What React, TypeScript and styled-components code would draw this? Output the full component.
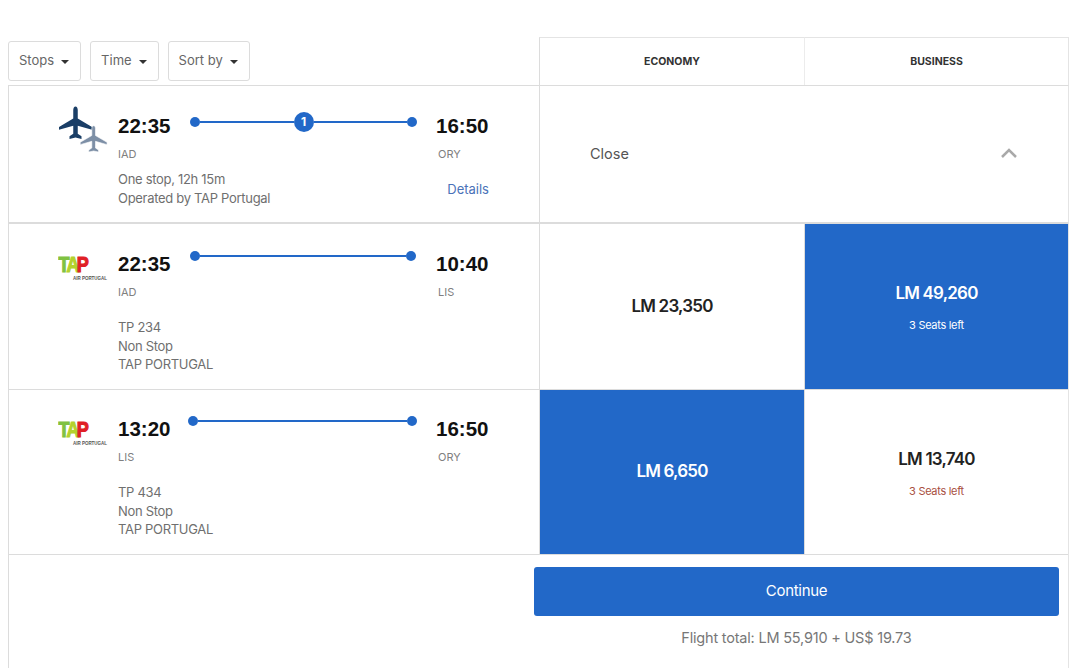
import styled, { createGlobalStyle } from "styled-components";

const BLUE = "#2268c8";
const LINE = "#dcdcdc";

type Fare = { price: string; seats?: string; selected?: boolean };

type Flight = {
  depart: string;
  arrive: string;
  from: string;
  to: string;
  notes: string[];
  height: number;
  top: number;
  routeLeft: number;
  routeRight: number;
  economy: Fare;
  business: Fare;
};

const flights: Flight[] = [
  {
    depart: "22:35",
    arrive: "10:40",
    from: "IAD",
    to: "LIS",
    notes: ["TP 234", "Non Stop", "TAP PORTUGAL"],
    height: 166,
    top: 28,
    routeLeft: 0,
    routeRight: 1,
    economy: { price: "LM 23,350" },
    business: { price: "LM 49,260", seats: "3 Seats left", selected: true },
  },
  {
    depart: "13:20",
    arrive: "16:50",
    from: "LIS",
    to: "ORY",
    notes: ["TP 434", "Non Stop", "TAP PORTUGAL"],
    height: 165,
    top: 27,
    routeLeft: -2,
    routeRight: 0,
    economy: { price: "LM 6,650", selected: true },
    business: { price: "LM 13,740", seats: "3 Seats left" },
  },
];

const PLANE =
  "M12 1c-.9 0-1.5 1-1.5 2.4V9L1 14.6v1.9l9.5-2.7v5.4L8 20.9V22.6l4-.9 4 .9v-1.7l-2.5-1.7v-5.4l9.5 2.7v-1.9L13.500 9V3.400C13.500 2 12.900 1 12 1z";

function Planes() {
  return (
    <svg width="50" height="50" viewBox="0 0 50 50" aria-hidden="true">
      <g transform="translate(-0.500 -1) scale(1.5)">
        <path d={PLANE} fill="#1a3e66" />
      </g>
      <g transform="translate(21 18.500) scale(1.22)">
        <path d={PLANE} fill="#7d8fa6" stroke="#fff" strokeWidth="0.5" />
      </g>
    </svg>
  );
}

function TapLogo() {
  return (
    <svg width="58" height="34" viewBox="0 -7 58 34" aria-hidden="true">
      <g transform="scale(0.82 1)">
        <text
          x="0.500"
          y="16"
          fontFamily="Liberation Sans"
          fontWeight="700"
          fontSize="22"
          letterSpacing="-3.500"
          strokeWidth="1.200"
        >
          <tspan fill="#7fc241" stroke="#7fc241">T</tspan>
          <tspan fill="#b4d12c" stroke="#b4d12c">A</tspan>
          <tspan fill="#e01f26" stroke="#e01f26">P</tspan>
        </text>
      </g>
      <text
        x="15"
        y="24"
        fontFamily="Liberation Sans"
        fontWeight="700"
        fontSize="5"
        fill="#555"
        textLength="34"
        lengthAdjust="spacingAndGlyphs"
      >
        AIR PORTUGAL
      </text>
    </svg>
  );
}

export default function App() {
  return (
    <>
      <GlobalStyle />
      <Page>
        <TopBar>
          <Filters>
            {["Stops", "Time", "Sort by"].map((label) => (
              <FilterButton key={label}>
                {label}
                <Caret />
              </FilterButton>
            ))}
          </Filters>
          <CabinHead>ECONOMY</CabinHead>
          <CabinHead $last>BUSINESS</CabinHead>
        </TopBar>

        <Table>
          <SummaryRow>
            <FlightCell $top={28}>
              <LogoSlot $offset={-8}>
                <Planes />
              </LogoSlot>
              <Time>22:35</Time>
              <Route>
                <Dot />
                <Track />
                <StopBadge>1</StopBadge>
                <Track />
                <Dot />
              </Route>
              <ArriveTime>16:50</ArriveTime>
              <span />
              <Code>IAD</Code>
              <span />
              <ArriveCode>ORY</ArriveCode>
              <span />
              <Notes $gap={8}>
                <div>One stop, 12h 15m</div>
                <div>Operated by TAP Portugal</div>
              </Notes>
              <Details>Details</Details>
            </FlightCell>
            <CloseCell>
              <CloseLabel>Close</CloseLabel>
              <svg width="18" height="10" viewBox="0 0 18 10" aria-hidden="true">
                <path d="M2 9 L9 2 L16 9" fill="none" stroke="#a9a9a9" strokeWidth="2.500" />
              </svg>
            </CloseCell>
          </SummaryRow>

          {flights.map((f) => (
            <FlightRow key={f.notes[0]} $height={f.height}>
              <FlightCell $top={f.top}>
                <LogoSlot $offset={-3}>
                  <TapLogo />
                </LogoSlot>
                <Time>{f.depart}</Time>
                <Route $lift={4} $left={f.routeLeft} $right={f.routeRight}>
                  <Dot />
                  <Track />
                  <Dot />
                </Route>
                <ArriveTime>{f.arrive}</ArriveTime>
                <span />
                <Code>{f.from}</Code>
                <span />
                <ArriveCode>{f.to}</ArriveCode>
                <span />
                <Notes $gap={18}>
                  {f.notes.map((n) => (
                    <div key={n}>{n}</div>
                  ))}
                </Notes>
              </FlightCell>
              {[f.economy, f.business].map((fare) => (
                <FareCell key={fare.price} $selected={fare.selected}>
                  <Price>{fare.price}</Price>
                  {fare.seats && <Seats $selected={fare.selected}>{fare.seats}</Seats>}
                </FareCell>
              ))}
            </FlightRow>
          ))}

          <Footer>
            <FooterColumn>
              <ContinueButton>Continue</ContinueButton>
              <Total>Flight total: LM 55,910 + US$ 19.73</Total>
            </FooterColumn>
          </Footer>
        </Table>
      </Page>
    </>
  );
}

const GlobalStyle = createGlobalStyle`
  html, body {
    margin: 0;
    background: #fff;
    font-family: "Inter", "Liberation Sans", sans-serif;
    overflow: hidden;
  }
`;

const Page = styled.div`
  width: 1061px;
  height: 668px;
  margin-left: 8px;
  padding-top: 37px;
  box-sizing: border-box;
`;

const TopBar = styled.div`
  display: grid;
  grid-template-columns: 531px 265px 265px;
  height: 48px;
`;

const Filters = styled.div`
  display: flex;
  gap: 9px;
  padding-top: 4px;
`;

const FilterButton = styled.button`
  height: 40px;
  padding: 0 11px 2px 10px;
  display: flex;
  align-items: center;
  gap: 7px;
  background: #fff;
  border: 1px solid ${LINE};
  border-radius: 3px;
  font: 400 13px "Inter", sans-serif;
  color: #666;
`;

const Caret = styled.span`
  width: 0;
  height: 0;
  margin-top: 3px;
  border-left: 4px solid transparent;
  border-right: 4px solid transparent;
  border-top: 4px solid #333;
`;

const CabinHead = styled.div<{ $last?: boolean }>`
  display: flex;
  align-items: center;
  justify-content: center;
  border-top: 1px solid #e4e4e4;
  border-left: 1px solid ${(p) => (p.$last ? "#ececec" : LINE)};
  border-right: ${(p) => (p.$last ? "1px solid #e4e4e4" : "none")};
  font-size: 10.500px;
  font-weight: 700;
  color: #333;
`;

const Table = styled.div`
  height: 583px;
  box-sizing: border-box;
  border-top: 1px solid ${LINE};
  border-left: 1px solid ${LINE};
  border-right: 1px solid #e4e4e4;
`;

const SummaryRow = styled.div`
  display: grid;
  grid-template-columns: 530px 1fr;
  height: 138px;
  border-bottom: 2px solid ${LINE};
  box-sizing: border-box;
`;

const FlightRow = styled.div<{ $height: number }>`
  display: grid;
  grid-template-columns: 530px 265px 264px;
  height: ${(p) => p.$height}px;
  border-bottom: 1px solid ${LINE};
  box-sizing: border-box;
`;

const FlightCell = styled.div<{ $top: number }>`
  display: grid;
  grid-template-columns: 60px 72px 227px 72px;
  grid-template-rows: 24px auto auto;
  align-content: start;
  padding: ${(p) => p.$top}px 0 0 49px;
`;

const LogoSlot = styled.div<{ $offset: number }>`
  height: 24px;
  margin-top: ${(p) => p.$offset}px;
`;

const Time = styled.div`
  font-size: 20.500px;
  font-weight: 700;
  line-height: 24px;
  color: #111;
  font-family: "Liberation Sans", sans-serif;
`;

const ArriveTime = styled(Time)`
  padding-left: 19px;
`;

const Route = styled.div<{ $lift?: number; $left?: number; $right?: number }>`
  display: flex;
  align-items: center;
  height: 16px;
  margin-top: ${(p) => -(p.$lift ?? 0)}px;
  margin-left: ${(p) => p.$left ?? 0}px;
  margin-right: ${(p) => p.$right ?? 0}px;
`;

const Dot = styled.span`
  width: 10px;
  height: 10px;
  border-radius: 50%;
  background: ${BLUE};
  flex: none;
`;

const Track = styled.span`
  flex: 1;
  height: 2px;
  background: ${BLUE};
`;

const StopBadge = styled.span`
  width: 20px;
  height: 20px;
  flex: none;
  border-radius: 50%;
  background: ${BLUE};
  color: #fff;
  font-size: 12px;
  font-weight: 700;
  line-height: 20px;
  text-align: center;
`;

const Code = styled.div`
  margin-top: 8px;
  font-size: 11px;
  line-height: 16px;
  color: #808080;
`;

const ArriveCode = styled(Code)`
  padding-left: 21px;
`;

const Notes = styled.div<{ $gap: number }>`
  grid-column: 2 / 4;
  margin-top: ${(p) => p.$gap}px;
  font-size: 13px;
  letter-spacing: -0.3px;
  line-height: 18.500px;
  color: #6f6f6f;
`;

const Details = styled.a`
  align-self: center;
  justify-self: end;
  margin-top: 8px;
  font-size: 13px;
  color: #4a72b8;
`;

const CloseCell = styled.div`
  display: flex;
  align-items: center;
  justify-content: space-between;
  padding: 0 50px 2px 50px;
  border-left: 1px solid ${LINE};
`;

const CloseLabel = styled.span`
  font-size: 14.500px;
  color: #555;
`;

const FareCell = styled.div<{ $selected?: boolean }>`
  display: flex;
  flex-direction: column;
  align-items: center;
  justify-content: center;
  gap: 11px;
  padding-bottom: 2px;
  background: ${(p) => (p.$selected ? BLUE : "#fff")};
  color: ${(p) => (p.$selected ? "#fff" : "#222")};
  border-left: 1px solid ${LINE};
`;

const Price = styled.div`
  font-size: 17px;
  font-weight: 600;
  letter-spacing: -0.8px;
`;

const Seats = styled.div<{ $selected?: boolean }>`
  margin: 4px 0 -4px;
  font-size: 11px;
  letter-spacing: -0.3px;
  color: ${(p) => (p.$selected ? "#fff" : "#a8503f")};
`;

const Footer = styled.div`
  display: flex;
  justify-content: flex-end;
  padding: 12px 9px 0 0;
`;

const FooterColumn = styled.div`
  width: 525px;
  display: flex;
  flex-direction: column;
  align-items: center;
`;

const ContinueButton = styled.button`
  width: 100%;
  height: 49px;
  padding: 0 0 2px;
  border: 0;
  border-radius: 3px;
  background: ${BLUE};
  color: #fff;
  font: 400 15px "Inter", sans-serif;
  letter-spacing: -0.3px;
`;

const Total = styled.div`
  margin-top: 13px;
  font-size: 14.500px;
  letter-spacing: -0.2px;
  color: #777;
`;
